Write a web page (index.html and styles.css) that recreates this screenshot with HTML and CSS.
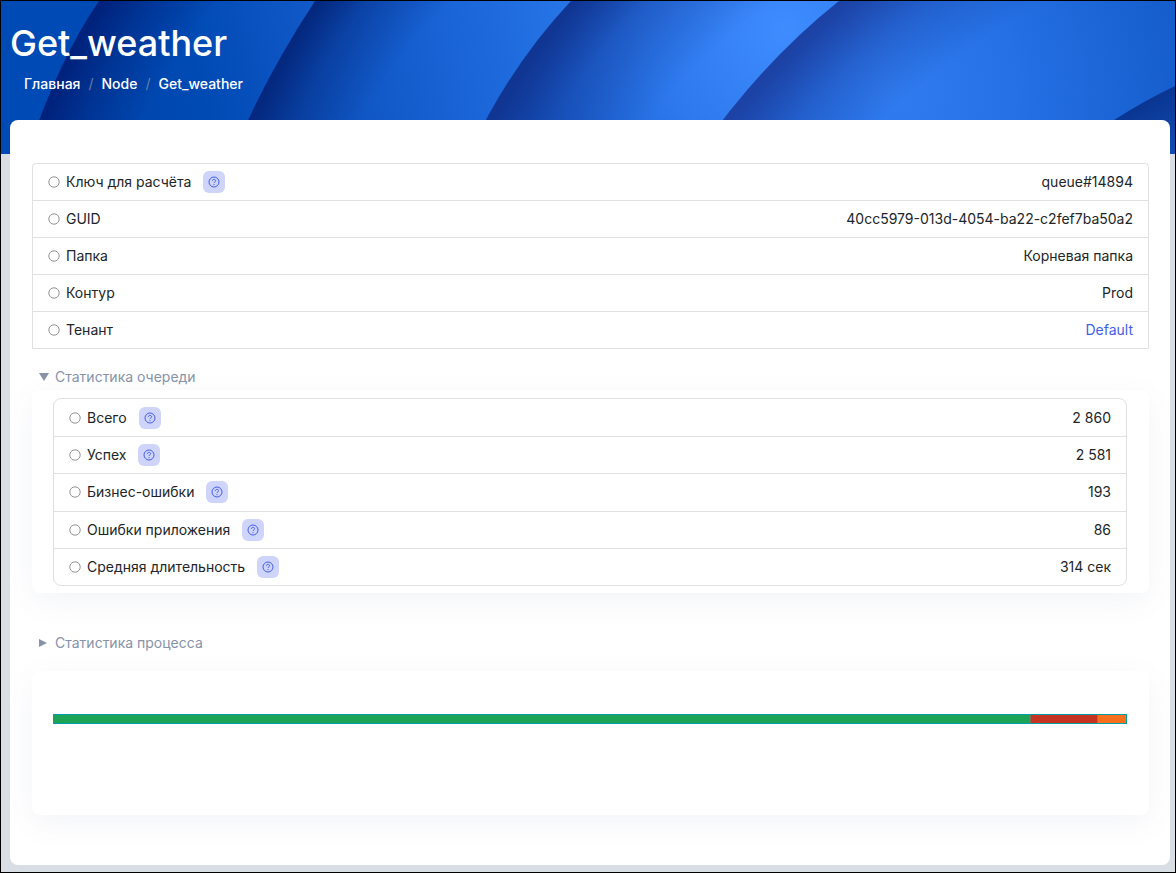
FILE: index.html
```html
<!DOCTYPE html>
<html lang="ru">
<head>
<meta charset="utf-8">
<title>Get_weather</title>
<meta name="viewport" content="width=device-width, initial-scale=1">
<link rel="stylesheet" href="styles.css">
</head>
<body>
<svg class="sprite" aria-hidden="true">
  <symbol id="circle" viewBox="0 0 12 12"><circle cx="6" cy="6" r="5.2" fill="none" stroke="currentColor" stroke-width=".8"/></symbol>
  <symbol id="help" viewBox="0 0 12 12">
    <circle cx="6" cy="6" r="5" fill="none" stroke="currentColor"/>
    <path d="M4.4 4.9C4.4 3.9 5 3.4 6 3.4S7.6 3.9 7.6 4.8C7.6 5.8 6 5.9 6 7" fill="none" stroke="currentColor"/>
    <circle cx="6" cy="8.6" r=".6" fill="currentColor"/>
  </symbol>
</svg>
<div class="page">
  <header class="hero">
    <svg class="hero-art" viewBox="0 0 1174 153" preserveAspectRatio="none" aria-hidden="true">
      <defs>
        <linearGradient id="b1" gradientUnits="userSpaceOnUse" x1="60" y1="60" x2="310" y2="0"><stop offset="0" stop-color="#0044aa"/><stop offset=".5" stop-color="#004ab4"/><stop offset="1" stop-color="#1159c8"/></linearGradient>
        <linearGradient id="b2" gradientUnits="userSpaceOnUse" x1="280" y1="60" x2="560" y2="0"><stop offset="0" stop-color="#0b4fb8"/><stop offset=".5" stop-color="#1660d2"/><stop offset="1" stop-color="#2674e6"/></linearGradient>
        <radialGradient id="b3" gradientUnits="userSpaceOnUse" cx="785" cy="30" r="270"><stop offset="0" stop-color="#3f8cff"/><stop offset=".5" stop-color="#2c78ec"/><stop offset="1" stop-color="#1759c8"/></radialGradient>
        <radialGradient id="b4" gradientUnits="userSpaceOnUse" cx="890" cy="90" r="320"><stop offset="0" stop-color="#307cf0"/><stop offset=".4" stop-color="#2470e4"/><stop offset="1" stop-color="#135ac8"/></radialGradient>
        <radialGradient id="s1" gradientUnits="userSpaceOnUse" cx="559" cy="307" r="550"><stop offset=".83" stop-color="#00227c" stop-opacity="0"/><stop offset=".93" stop-color="#00227c" stop-opacity=".5"/><stop offset="1" stop-color="#00227c"/></radialGradient>
        <radialGradient id="s2" gradientUnits="userSpaceOnUse" cx="763" cy="325" r="550"><stop offset=".82" stop-color="#04287f" stop-opacity="0"/><stop offset=".93" stop-color="#04287f" stop-opacity=".45"/><stop offset="1" stop-color="#04287f"/></radialGradient>
        <radialGradient id="s3" gradientUnits="userSpaceOnUse" cx="1074" cy="440" r="666"><stop offset=".8" stop-color="#103592" stop-opacity="0"/><stop offset=".92" stop-color="#103592" stop-opacity=".4"/><stop offset="1" stop-color="#103592"/></radialGradient>
        <radialGradient id="s4" gradientUnits="userSpaceOnUse" cx="1406" cy="665" r="870"><stop offset=".87" stop-color="#1c42a5" stop-opacity="0"/><stop offset=".94" stop-color="#1c42a5" stop-opacity=".4"/><stop offset="1" stop-color="#1c42a5"/></radialGradient>
        <linearGradient id="b5" gradientUnits="userSpaceOnUse" x1="1140" y1="100" x2="1170" y2="153"><stop offset="0" stop-color="#0a3490"/><stop offset="1" stop-color="#104cb2"/></linearGradient>
        <clipPath id="c1"><path d="M98 0Q58 58 26 153H1174V0Z"/></clipPath>
        <clipPath id="c2"><path d="M314 0Q264 76 232 153H1174V0Z"/></clipPath>
        <clipPath id="c3"><path d="M570 0Q508 66 468 153H1174V0Z"/></clipPath>
        <clipPath id="c4"><path d="M838 0Q760 62 697 153H1174V0Z"/></clipPath>
      </defs>
      <rect width="1174" height="153" fill="#004ab5"/>
      <g clip-path="url(#c1)"><rect width="1174" height="153" fill="url(#b1)"/><rect width="310" height="153" fill="url(#s1)"/></g>
      <g clip-path="url(#c2)"><rect width="1174" height="153" fill="url(#b2)"/><rect width="560" height="153" fill="url(#s2)"/></g>
      <g clip-path="url(#c3)"><rect width="1174" height="153" fill="url(#b3)"/><rect width="830" height="153" fill="url(#s3)"/></g>
      <g clip-path="url(#c4)"><rect width="1174" height="153" fill="url(#b4)"/><rect width="1100" height="153" fill="url(#s4)"/></g>
      <path d="M1174 85Q1110 116 1068 153H1174Z" fill="url(#b5)"/>
    </svg>
    <h1 class="title">Get_weather</h1>
    <nav class="crumbs" aria-label="Навигация">
      <a href="#">Главная</a><span class="slash">/</span><a href="#">Node</a><span class="slash">/</span><a href="#">Get_weather</a>
    </nav>
  </header>
  <main class="card">
    <dl class="list list-top">
      <div class="row"><dt><svg class="dot"><use href="#circle"/></svg>Ключ для расчёта<button class="help" type="button" aria-label="Справка"><svg><use href="#help"/></svg></button></dt><dd>queue#14894</dd></div>
      <div class="row"><dt><svg class="dot"><use href="#circle"/></svg>GUID</dt><dd>40cc5979-013d-4054-ba22-c2fef7ba50a2</dd></div>
      <div class="row"><dt><svg class="dot"><use href="#circle"/></svg>Папка</dt><dd>Корневая папка</dd></div>
      <div class="row"><dt><svg class="dot"><use href="#circle"/></svg>Контур</dt><dd>Prod</dd></div>
      <div class="row"><dt><svg class="dot"><use href="#circle"/></svg>Тенант</dt><dd><a href="#">Default</a></dd></div>
    </dl>
    <details class="stats" open>
      <summary><svg class="marker" viewBox="0 0 10 10" aria-hidden="true"><path d="M0 1H10L5 9Z"/></svg>Статистика очереди</summary>
      <div class="panel">
        <dl class="list list-round">
          <div class="row"><dt><svg class="dot"><use href="#circle"/></svg>Всего<button class="help" type="button" aria-label="Справка"><svg><use href="#help"/></svg></button></dt><dd>2 860</dd></div>
          <div class="row"><dt><svg class="dot"><use href="#circle"/></svg>Успех<button class="help" type="button" aria-label="Справка"><svg><use href="#help"/></svg></button></dt><dd>2 581</dd></div>
          <div class="row"><dt><svg class="dot"><use href="#circle"/></svg>Бизнес-ошибки<button class="help" type="button" aria-label="Справка"><svg><use href="#help"/></svg></button></dt><dd>193</dd></div>
          <div class="row"><dt><svg class="dot"><use href="#circle"/></svg>Ошибки приложения<button class="help" type="button" aria-label="Справка"><svg><use href="#help"/></svg></button></dt><dd>86</dd></div>
          <div class="row"><dt><svg class="dot"><use href="#circle"/></svg>Средняя длительность<button class="help" type="button" aria-label="Справка"><svg><use href="#help"/></svg></button></dt><dd>314 сек</dd></div>
        </dl>
      </div>
    </details>
    <details class="stats">
      <summary><svg class="marker" viewBox="0 0 10 10" aria-hidden="true"><path d="M0 1V9L8 5Z"/></svg>Статистика процесса</summary>
    </details>
    <section class="panel chart">
      <div class="bar" role="img" aria-label="Успех 2581, бизнес-ошибки 193, ошибки приложения 86">
        <span class="ok" style="width:91%"></span><span class="business" style="width:6.3%"></span><span class="app"></span>
      </div>
    </section>
  </main>
</div>
</body>
</html>
```
FILE: styles.css
```css
* { box-sizing: border-box; }
body {
  margin: 0;
  font: 400 14px/20px Inter, "Liberation Sans", sans-serif;
  color: #212529;
  background: #d9dde4;
}
a { color: inherit; text-decoration: none; }
.sprite { display: none; }
.page {
  min-height: 100vh;
  padding-bottom: 7px;
  border: 1px solid #000;
}
.hero {
  position: relative;
  height: 153px;
  padding: 18px 9px;
  color: #fff;
}
.hero-art { position: absolute; inset: 0; width: 100%; height: 100%; }
.title { position: relative; margin: 0; font-size: 36px; line-height: 48px; font-weight: 500; }
.crumbs { position: relative; display: flex; gap: 8px; padding: 7px 14px; font-weight: 500; }
.slash { color: #6c7fa8; font-weight: 400; }
.card {
  position: relative;
  margin: -34px 5px 0 9px;
  padding: 43px 21px 50px 22px;
  background: #fff;
  border-radius: 8px;
}
.list { display: grid; margin: 0; border: 1px solid #dee0e2; background: #fff; }
.list-top { border-radius: 4px 4px 0 0; }
.list-round { grid-auto-rows: 1fr; border-radius: 8px; min-height: 188px; }
.row { display: flex; align-items: center; justify-content: space-between; min-height: 37px; padding: 0 15px; }
.row + .row { border-top: 1px solid #dee0e2; }
.row:first-child { min-height: 36px; }
dt, dd { display: flex; align-items: center; margin: 0; }
.dot { width: 12px; height: 12px; margin-right: 6px; color: #777; }
dd a { color: #435ee8; }
.help {
  display: grid;
  place-items: center;
  width: 22px;
  height: 22px;
  margin-left: 12px;
  padding: 0;
  border: 0;
  border-radius: 6px;
  background: #cfd5fa;
  color: #435ee8;
}
.help svg { width: 12px; height: 12px; }
.stats { margin-top: 18px; color: #8792a8; }
summary { display: flex; align-items: center; gap: 6px; padding-left: 7px; list-style: none; cursor: pointer; }
.marker { width: 10px; height: 10px; fill: currentColor; }
.panel {
  padding: 8px 22px 7px 21px;
  border-radius: 8px;
  background: #fff;
  color: #212529;
  box-shadow: 0 8px 30px rgba(90, 100, 150, .07);
}
.stats .panel { margin-top: 3px; }
.stats + .stats { margin-top: 40px; }
.chart { min-height: 144px; margin-top: 18px; padding-top: 43px; }
.bar { display: flex; height: 10px; border: 1px solid #009fa5; }
.ok { background: #1da355; }
.business { background: #c53423; border-left: 1px solid #8a6a5c; }
.app { flex: 1; background: #f56f1c; border-left: 1px solid #8a7a6c; }
```
